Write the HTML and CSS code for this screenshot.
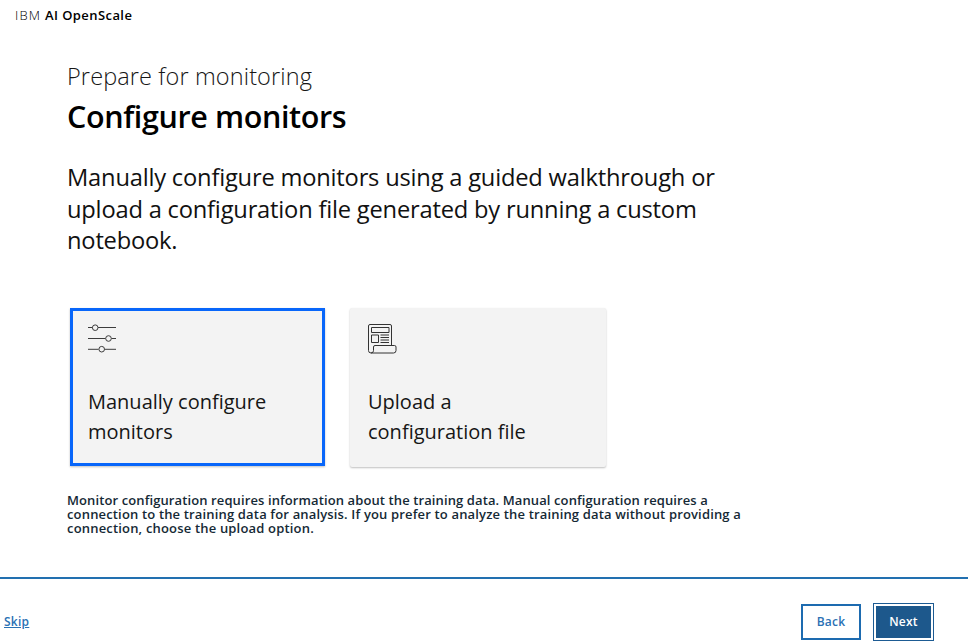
FILE: index.html
```html
<!DOCTYPE html>
<html lang="en">
<head>
<meta charset="utf-8">
<title>IBM AI OpenScale</title>
<link rel="stylesheet" href="styles.css">
</head>
<body>
<header class="brand"><span class="brand-company">IBM</span><span class="brand-product">AI OpenScale</span></header>
<main class="content">
  <p class="eyebrow">Prepare for monitoring</p>
  <h1 class="title">Configure monitors</h1>
  <p class="intro"><span class="line">Manually configure monitors using a guided walkthrough or</span> <span class="line">upload a configuration file generated by running a custom</span> <span class="line">notebook.</span></p>
  <div class="cards">
    <button class="card card-selected">
      <svg class="icon" width="32" height="32" viewBox="0 0 32 32" fill="none" stroke="#3c3c3c">
        <path d="M2 5.500h4.500M12 5.500h18M2 16.500h17.500M25.500 16.500h4.500M2 27.300h10.500M18.500 27.300h11.500"/>
        <circle cx="9.200" cy="5.700" r="2.800"/><circle cx="22.500" cy="16.500" r="2.800"/><circle cx="15.700" cy="27.200" r="2.800"/>
      </svg>
      <span class="line">Manually configure</span><span class="line">monitors</span>
    </button>
    <button class="card">
      <svg class="icon" width="32" height="32" viewBox="0 0 32 32" fill="none" stroke="#333">
        <path d="M25.500 23.500V4a1.500 1.500 0 0 0-1.500-1.500H4A1.500 1.500 0 0 0 2.500 4v24.500a2.500 2.500 0 0 0 5 0V25a1.500 1.500 0 0 1 1.500-1.500h19.500a1.500 1.500 0 0 1 1.500 1.500v3.500a2.500 2.500 0 0 1-2.500 2.500H5"/>
        <path d="M5.500 5.500h17.500v5H5.500zM5.500 13h7v7.500h-7zM14.500 13h8.500M14.500 15.500h8.500M14.500 18h8.500M14.500 20.500h8.500"/>
      </svg>
      <span class="line">Upload a</span><span class="line">configuration file</span>
    </button>
  </div>
  <p class="note"><span class="line n1">Monitor configuration requires information about the training data. Manual configuration requires a</span> <span class="line n2">connection to the training data for analysis. If you prefer to analyze the training data without providing a</span> <span class="line n3">connection, choose the upload option.</span></p>
</main>
<footer class="footer">
  <a class="skip" href="#">Skip</a>
  <div class="actions">
    <button class="btn btn-back">Back</button>
    <button class="btn btn-next">Next</button>
  </div>
</footer>
</body>
</html>
```
FILE: styles.css
```css
* { box-sizing: border-box; }
body {
  margin: 0;
  height: 644px;
  display: flex;
  flex-direction: column;
  overflow: hidden;
  background: #fff;
  color: #000;
  font-family: "Open Sans", "Noto Sans", sans-serif;
}
p, h1 { margin: 0; }
button { font-family: inherit; }
.line { display: block; white-space: nowrap; }

.brand {
  height: 32px;
  padding-left: 15px;
  display: flex;
  gap: 3px;
  font-size: 13px;
  line-height: 31px;
}
.brand-company { font-weight: 300; width: 27px; letter-spacing: 1.1px; }
.brand-product { font-weight: 600; letter-spacing: 0.42px; }

.content { height: 545px; padding: 27px 0 0 67px; }
.eyebrow {
  font-size: 23.5px;
  font-weight: 300;
  line-height: 34px;
  letter-spacing: 0.12px;
  color: #161616;
}
.title {
  font-size: 30.5px;
  font-weight: 600;
  line-height: 46px;
  letter-spacing: -0.38px;
}
.intro {
  margin-top: 23px;
  font-size: 23.7px;
  line-height: 31.5px;
  letter-spacing: -0.2px;
  color: #111;
}

.cards { display: flex; gap: 25px; margin: 51px 0 0 3px; }
.card {
  width: 256px;
  height: 159px;
  padding: 15px 17px 0 18px;
  border: 0;
  border-radius: 2px;
  background: #f3f3f3;
  box-shadow: 0 1px 2px rgba(0, 0, 0, 0.25);
  color: #161616;
  text-align: left;
  font-size: 20px;
  line-height: 30px;
  display: flex;
  flex-direction: column;
}
.card-selected {
  width: 255px;
  height: 158px;
  padding: 12px 14px 0 15px;
  border: 3px solid #0866fa;
  border-radius: 0;
}
.icon { display: block; margin: -1px 0 33px -2px; flex: none; }

.note {
  margin-top: 26px;
  font-size: 13px;
  font-weight: 600;
  line-height: 14px;
  color: #152935;
}
.n1 { letter-spacing: 0.105px; }
.n2 { letter-spacing: 0.16px; }
.n3 { letter-spacing: 0.18px; }

.footer {
  flex: 1;
  display: flex;
  justify-content: space-between;
  align-items: center;
  padding: 20px 34px 0 4px;
  border-top: 2px solid #2270b0;
}
.skip {
  font-size: 12px;
  font-weight: 600;
  color: #2a71b4;
  letter-spacing: 0.25px;
}
.actions { display: flex; align-items: center; gap: 12px; }
.btn {
  padding: 0;
  font-size: 12px;
  font-weight: 600;
  letter-spacing: 0.2px;
}
.btn-back {
  width: 60px;
  height: 36px;
  border: 2px solid #1d6bb0;
  background: #fff;
  color: #2a71b4;
}
.btn-next {
  width: 61px;
  height: 38px;
  border: 1px solid #1d5b93;
  background: #1d588c;
  box-shadow: inset 0 0 0 2px #fff;
  color: #fff;
}
```
